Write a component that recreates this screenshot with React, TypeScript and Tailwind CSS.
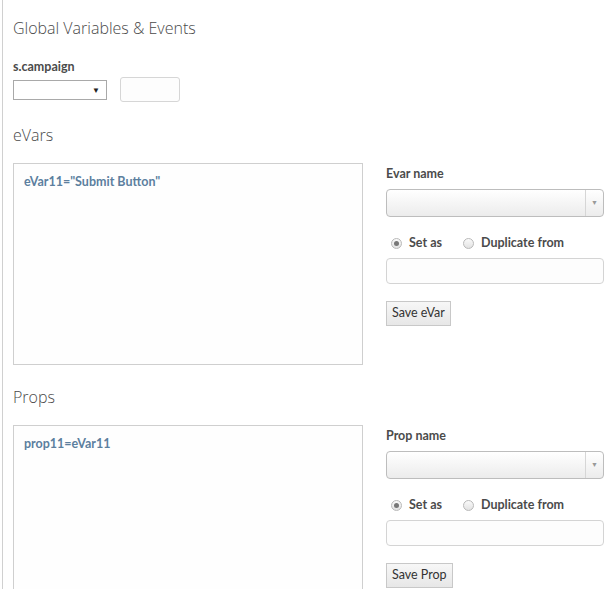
import React from 'react';

const font = { fontFamily: '"Open Sans", "Liberation Sans", sans-serif' };
const lato = { fontFamily: 'Lato, "Open Sans", sans-serif' };

function Radio({ checked, label }: { checked?: boolean; label: string }) {
  return (
    <label className="flex items-center gap-[7px] text-[12.5px] font-bold text-[#4b4b4b]" style={lato}>
      <span className="w-[11px] h-[11px] rounded-full border border-[#b9b9b9] bg-gradient-to-b from-[#fafafa] to-[#e2e2e2] flex items-center justify-center">
        {checked && <span className="w-[5px] h-[5px] rounded-full bg-[#777]" />}
      </span>
      <span>{label}</span>
    </label>
  );
}

function EditorSection({
  title,
  code,
  nameLabel,
  buttonLabel,
}: {
  title: string;
  code: string;
  nameLabel: string;
  buttonLabel: string;
}) {
  return (
    <div>
      <h2 className="text-[16px] font-light text-[#4a4a4a] leading-[20px] h-[20px]">{title}</h2>
      <div className="flex mt-[18px]">
        <div className="w-[350px] h-[202px] border border-[#cfcfcf] bg-[#fefefe] px-[10px] py-[10px]">
          <div className="text-[12.5px] font-bold text-[#5c7f9e] leading-[16px]" style={lato}>
            {code}
          </div>
        </div>
        <div className="ml-[23px] w-[218px] pt-[3px]">
          <div className="text-[12.5px] font-bold text-[#4b4b4b] leading-[16px]" style={lato}>
            {nameLabel}
          </div>
          <div className="mt-[7px] h-[28px] rounded-[4px] border border-[#bdbdbd] bg-gradient-to-b from-white to-[#ececec] flex">
            <div className="flex-1" />
            <div className="w-[18px] border-l border-[#d6d6d6] flex items-center justify-center">
              <span className="text-[7px] text-[#999]">▼</span>
            </div>
          </div>
          <div className="flex items-center gap-[21px] mt-[18px] pl-[5px] h-[16px]">
            <Radio checked label="Set as" />
            <Radio label="Duplicate from" />
          </div>
          <div className="mt-[7px] h-[26px] rounded-[4px] border border-[#d4d4d4] bg-[#fdfdfd]" />
          <button
            className="mt-[17px] h-[25px] px-[5px] border border-[#c8c8c8] bg-gradient-to-b from-[#f7f7f7] to-[#e7e7e7] text-[12.5px] text-[#333]"
            style={lato}
          >
            {buttonLabel}
          </button>
        </div>
      </div>
    </div>
  );
}

export default function App() {
  return (
    <div className="w-[614px] h-[589px] overflow-hidden bg-white" style={font}>
      <div className="ml-[2px] border-l border-[#d0d0d0] pl-[10px] pt-[18px] min-h-[589px]">
        <h1 className="text-[16px] font-light text-[#4a4a4a] leading-[20px]">Global Variables &amp; Events</h1>
        <div className="mt-[21px] text-[12.5px] font-bold text-[#4b4b4b] leading-[16px]" style={lato}>
          s.campaign
        </div>
        <div className="flex items-center mt-[2px]">
          <div className="w-[94px] h-[20px] border border-[#a9a9a9] bg-white flex items-center justify-end pr-[6px]">
            <span className="text-[8px] text-[#222]">▼</span>
          </div>
          <div className="ml-[13px] w-[60px] h-[25px] rounded-[3px] border border-[#d6d6d6] bg-[#fdfdfd]" />
        </div>
        <div className="mt-[23px]">
          <EditorSection
            title="eVars"
            code={'eVar11="Submit Button"'}
            nameLabel="Evar name"
            buttonLabel="Save eVar"
          />
        </div>
        <div className="mt-[22px]">
          <EditorSection title="Props" code="prop11=eVar11" nameLabel="Prop name" buttonLabel="Save Prop" />
        </div>
      </div>
    </div>
  );
}
